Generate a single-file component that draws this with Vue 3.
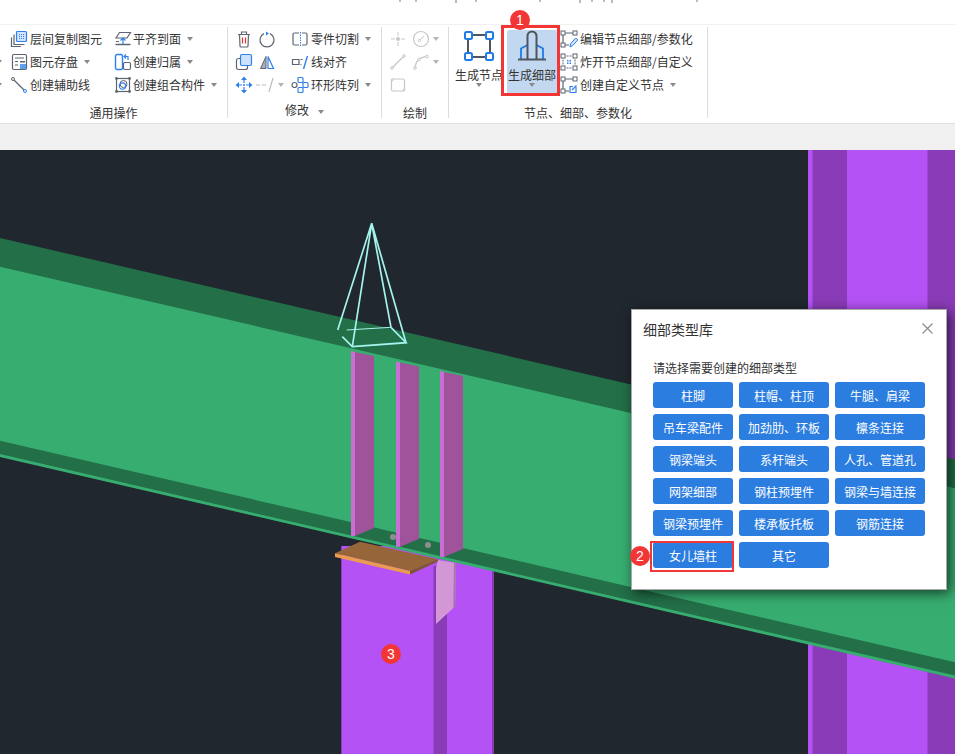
<template>
  <div class="app">
    <div class="top-strip">
      <svg width="955" height="24" viewBox="0 0 955 24">
        <path d="M400 0v2M416 0v2M456 0v3M476 0v2M540 0v2M580 0v3M592 0v2M604 0v2M612 0v3M697 0v2" stroke="#777" stroke-width="1" />
      </svg>
    </div>

    <div class="ribbon">
      <!-- 通用操作 -->
      <div class="group g1">
        <div class="tools">
          <div class="clip-col">
            <div class="tool"></div>
            <div class="tool"><i class="caret"></i></div>
            <div class="tool"><i class="caret"></i></div>
          </div>
          <div class="col col-a">
            <div class="tool">
              <svg class="ico" viewBox="0 0 18 18"><path d="M4 4.500v10h10.500M1.500 7.500v9h9.500" fill="none" stroke="#5d6570" stroke-width="1.200" /><rect x="6.500" y="1.500" width="10" height="10" rx="1" fill="#d3e4fb" stroke="#2f80ed" stroke-width="1.200" /><path d="M9 4.500h5M9 6.500h5M9 8.500h5" stroke="#2f80ed" stroke-dasharray="1 1" /></svg>
              <span>层间复制图元</span>
            </div>
            <div class="tool">
              <svg class="ico" viewBox="0 0 18 18"><rect x="2.500" y="1.500" width="14" height="15" rx="1.500" fill="none" stroke="#5d6570" stroke-width="1.200" /><path d="M5 5h9M5 8.500h3M5 12h3" stroke="#5d6570" /><rect x="10" y="8" width="5" height="1.500" fill="#5d6570" /><rect x="10" y="11" width="6" height="5" fill="#5fa0ee" /></svg>
              <span>图元存盘</span><i class="caret"></i>
            </div>
            <div class="tool">
              <svg class="ico" viewBox="0 0 18 18"><path d="M3.500 3.500L14.500 14.500" stroke="#5d6570" stroke-width="1.200" /><circle cx="3" cy="3" r="1.500" fill="#fff" stroke="#5d6570" /><circle cx="15" cy="15" r="1.500" fill="#fff" stroke="#2f80ed" /></svg>
              <span>创建辅助线</span>
            </div>
          </div>
          <div class="col">
            <div class="tool">
              <svg class="ico" viewBox="0 0 18 18"><path d="M5.500 2.500H16.500L13 8H2z" fill="none" stroke="#5d6570" stroke-width="1.200" /><path d="M9 14V8M6.500 10.500L9 8l2.500 2.500" fill="none" stroke="#2f80ed" stroke-width="1.200" /><path d="M1.500 14.500H16.500" stroke="#5d6570" stroke-width="1.500" /><path d="M2 11.500h3" stroke="#5d6570" /></svg>
              <span>平齐到面</span><i class="caret"></i>
            </div>
            <div class="tool">
              <svg class="ico" viewBox="0 0 18 18"><rect x="1.500" y="1.500" width="7" height="15" rx="1.500" fill="none" stroke="#2f80ed" stroke-width="1.400" /><rect x="9.500" y="9.500" width="7" height="7" rx="1.500" fill="none" stroke="#5d6570" stroke-width="1.200" /><path d="M14 7V3.500H10.500M12 1.500L10 3.500l2 2" fill="none" stroke="#2f80ed" stroke-width="1.200" /></svg>
              <span>创建归属</span><i class="caret"></i>
            </div>
            <div class="tool">
              <svg class="ico" viewBox="0 0 18 18"><rect x="2.500" y="2.500" width="13" height="13" fill="none" stroke="#5d6570" stroke-width="1.200" /><circle cx="2.500" cy="2.500" r="1.400" fill="#5d6570" /><circle cx="15.500" cy="2.500" r="1.400" fill="#5d6570" /><circle cx="2.500" cy="15.500" r="1.400" fill="#5d6570" /><circle cx="15.500" cy="15.500" r="1.400" fill="#5d6570" /><circle cx="9.500" cy="8" r="3.500" fill="none" stroke="#5d6570" /><circle cx="8.500" cy="10" r="3.200" fill="none" stroke="#2f80ed" stroke-width="1.200" /></svg>
              <span>创建组合构件</span><i class="caret"></i>
            </div>
          </div>
        </div>
        <div class="group-label">通用操作</div>
      </div>
      <div class="divider"></div>

      <!-- 修改 -->
      <div class="group g2">
        <div class="tools">
          <div class="col icon-col">
            <div class="tool gap">
              <svg class="ico" viewBox="0 0 18 18"><path d="M3 4.500h12M4.500 4.500l.5 11.500a1 1 0 001 1h6a1 1 0 001-1l.5-11.500M6.500 4.500V2h5v2.500" fill="none" stroke="#5d6570" stroke-width="1.200" /><path d="M7.500 7.500v6M10.500 7.500v6" stroke="#e5322d" stroke-width="1.200" /></svg>
              <svg class="ico" viewBox="0 0 18 18"><path d="M6 3.600A7 7 0 1012 3.600" fill="none" stroke="#5d6570" stroke-width="1.200" /><path d="M8 1.500l3 2-3 2z" fill="#2f80ed" /></svg>
            </div>
            <div class="tool gap">
              <svg class="ico" viewBox="0 0 18 18"><rect x="1.500" y="5.500" width="11" height="11" rx="2" fill="#fff" stroke="#5d6570" stroke-width="1.200" /><rect x="5.500" y="1.500" width="11" height="11" rx="1.500" fill="#cfe2fb" stroke="#2f80ed" stroke-width="1.200" /></svg>
              <svg class="ico" viewBox="0 0 18 18"><path d="M8 3.500L2.500 15.500H8z" fill="#aab0b8" stroke="#5d6570" /><path d="M10 3.500L15.500 15.500H10z" fill="#fff" stroke="#2f80ed" stroke-width="1.200" /></svg>
            </div>
            <div class="tool gap">
              <svg class="ico" viewBox="0 0 18 18"><path d="M9 .5L6 4h6zM9 17.500L6 14h6zM.5 9L4 6v6zM17.500 9L14 6v6z" fill="#2f80ed" /><path d="M9 4v3M9 11v3M4 9h3M11 9h3" stroke="#2f80ed" stroke-width="1.200" /><circle cx="9" cy="9" r="1" fill="#2f80ed" /></svg>
              <svg class="ico wide" viewBox="0 0 22 18"><path d="M1 9h4M7 9h4" stroke="#b9bdc2" stroke-width="1.200" /><path d="M18 2L14 16" stroke="#b9bdc2" stroke-width="1.200" /></svg>
              <i class="caret light tight"></i>
            </div>
          </div>
          <div class="col">
            <div class="tool">
              <svg class="ico" viewBox="0 0 18 18"><path d="M8 3H3.500a1.500 1.500 0 00-1.500 1.500v9A1.500 1.500 0 003.500 15H8M11 3h3.500A1.500 1.500 0 0116 4.500v9a1.500 1.500 0 01-1.500 1.500H11" fill="none" stroke="#5d6570" stroke-width="1.200" /><path d="M9.500 2v14" stroke="#2f80ed" stroke-dasharray="1.500 1" /></svg>
              <span>零件切割</span><i class="caret"></i>
            </div>
            <div class="tool">
              <svg class="ico" viewBox="0 0 18 18"><path d="M8 6.500H1.500v5H8z" fill="none" stroke="#5d6570" stroke-width="1.200" /><path d="M9.500 6.500h2M9.500 11.500h1" stroke="#5d6570" stroke-width="1.200" /><path d="M16.500 3L12.500 16" stroke="#2f80ed" stroke-width="1.400" /></svg>
              <span>线对齐</span>
            </div>
            <div class="tool">
              <svg class="ico" viewBox="0 0 18 18"><rect x="7" y="1.500" width="5" height="5" rx="1" fill="none" stroke="#2f80ed" stroke-width="1.200" /><rect x="12" y="6.500" width="5" height="5" rx="1" fill="none" stroke="#2f80ed" stroke-width="1.200" /><rect x="7" y="11.500" width="5" height="5" rx="1" fill="none" stroke="#2f80ed" stroke-width="1.200" /><circle cx="3.500" cy="9" r="2.500" fill="none" stroke="#5d6570" stroke-width="1.200" /></svg>
              <span>环形阵列</span><i class="caret"></i>
            </div>
          </div>
        </div>
        <div class="group-label raised">修改<i class="caret label-caret"></i></div>
      </div>
      <div class="divider"></div>

      <!-- 绘制 -->
      <div class="group g3">
        <div class="tools">
          <div class="col">
            <div class="tool gap">
              <svg class="ico" viewBox="0 0 18 18"><path d="M2 9h4M12 9h4M9 2v4M9 12v4" stroke="#c4c7cb" /><circle cx="9" cy="9" r="2" fill="#c4c7cb" /></svg>
              <svg class="ico" viewBox="0 0 18 18"><circle cx="9" cy="9" r="7.500" fill="none" stroke="#c4c7cb" stroke-width="1.200" /><path d="M8 10L12 6" stroke="#c4c7cb" /><circle cx="7.500" cy="10.500" r="1.200" fill="#fff" stroke="#c4c7cb" /></svg>
              <i class="caret light"></i>
            </div>
            <div class="tool gap">
              <svg class="ico" viewBox="0 0 18 18"><path d="M3.500 14.500L14.500 3.500" stroke="#c4c7cb" stroke-width="1.200" /><circle cx="3" cy="15" r="1.300" fill="#fff" stroke="#c4c7cb" /><circle cx="15" cy="3" r="1.300" fill="#fff" stroke="#c4c7cb" /></svg>
              <svg class="ico" viewBox="0 0 18 18"><path d="M3 15C3.500 8 8 4 15 3.500" fill="none" stroke="#c4c7cb" stroke-width="1.200" /><circle cx="3" cy="15" r="1.300" fill="#fff" stroke="#c4c7cb" /><circle cx="7" cy="6.500" r="1.300" fill="#fff" stroke="#c4c7cb" /><circle cx="15" cy="3.500" r="1.300" fill="#fff" stroke="#c4c7cb" /></svg>
              <i class="caret light"></i>
            </div>
            <div class="tool">
              <svg class="ico" viewBox="0 0 18 18"><rect x="2.500" y="3" width="13" height="12" rx="1.500" fill="none" stroke="#c4c7cb" stroke-width="1.200" /><circle cx="3" cy="4" r="1" fill="#fff" stroke="#c4c7cb" /><circle cx="15" cy="14" r="1" fill="#fff" stroke="#c4c7cb" /></svg>
            </div>
          </div>
        </div>
        <div class="group-label">绘制</div>
      </div>
      <div class="divider"></div>

      <!-- 节点、细部、参数化 -->
      <div class="group g4">
        <div class="tools">
          <div class="big-btn">
            <svg width="32" height="32" viewBox="0 0 32 32"><path d="M8 5h16M8 27h16M5 8v16M27 8v16" stroke="#4d5560" stroke-width="2" /><rect x="2" y="2" width="7" height="7" rx="1.500" fill="#fff" stroke="#1e7be6" stroke-width="2" /><rect x="23" y="2" width="7" height="7" rx="1.500" fill="#fff" stroke="#1e7be6" stroke-width="2" /><rect x="2" y="23" width="7" height="7" rx="1.500" fill="#fff" stroke="#1e7be6" stroke-width="2" /><rect x="23" y="23" width="7" height="7" rx="1.500" fill="#fff" stroke="#1e7be6" stroke-width="2" /></svg>
            <span>生成节点</span>
            <i class="caret"></i>
          </div>
          <div class="big-btn active">
            <svg width="32" height="32" viewBox="0 0 32 32"><path d="M5 29V18.500L11.500 15M27 29V18.500L20.500 15" fill="none" stroke="#1e7be6" stroke-width="1.800" /><path d="M11.500 29V6a4.500 4.500 0 019 0V29" fill="none" stroke="#4d5560" stroke-width="2" /><path d="M2 29.500H30" stroke="#4d5560" stroke-width="2" /></svg>
            <span>生成细部</span>
            <i class="caret"></i>
            <div class="red-box big"></div>
          </div>
          <div class="col">
            <div class="tool">
              <svg class="ico" viewBox="0 0 18 18"><path d="M5 3h8M3 5v8M5 15h4" stroke="#5d6570" stroke-width="1.200" /><rect x="1" y="1" width="4" height="4" fill="#fff" stroke="#5d6570" /><rect x="13" y="1" width="4" height="4" fill="#fff" stroke="#5d6570" /><rect x="1" y="13" width="4" height="4" fill="#fff" stroke="#5d6570" /><path d="M10 17l.8-3.500 5-5.500 2 2-5 5.500z" fill="#cfe2fb" stroke="#2f80ed" /></svg>
              <span>编辑节点细部/参数化</span>
            </div>
            <div class="tool">
              <svg class="ico" viewBox="0 0 18 18"><path d="M6.500 3h5M6.500 15h5M3 6.500v5M15 6.500v5" stroke="#5d6570" stroke-dasharray="2 1" /><rect x="1" y="1" width="4" height="4" fill="#fff" stroke="#5d6570" /><rect x="13" y="1" width="4" height="4" fill="#fff" stroke="#5d6570" /><rect x="1" y="13" width="4" height="4" fill="#fff" stroke="#5d6570" /><rect x="13" y="13" width="4" height="4" fill="#fff" stroke="#5d6570" /><path d="M7 7h1.500v1.500H7zM9.500 7H11v1.500H9.500zM7 9.500h1.500V11H7zM9.500 9.500H11V11H9.500z" fill="#2f80ed" /></svg>
              <span>炸开节点细部/自定义</span>
            </div>
            <div class="tool">
              <svg class="ico" viewBox="0 0 18 18"><path d="M5 3h8M3 5v8M5 15h4" stroke="#5d6570" stroke-width="1.200" /><rect x="1" y="1" width="4" height="4" fill="#fff" stroke="#5d6570" /><rect x="13" y="1" width="4" height="4" fill="#fff" stroke="#5d6570" /><rect x="1" y="13" width="4" height="4" fill="#fff" stroke="#5d6570" /><path d="M16 11v5.500H10v-6h3" fill="none" stroke="#2f80ed" stroke-width="1.200" /><path d="M12 14l4.500-4.500" stroke="#2f80ed" stroke-width="1.200" /></svg>
              <span>创建自定义节点</span><i class="caret"></i>
            </div>
          </div>
        </div>
        <div class="group-label">节点、细部、参数化</div>
      </div>
      <div class="divider"></div>
      <div class="badge b1">1</div>
    </div>

    <div class="status-bar"></div>

    <div class="scene">
      <svg class="model" width="955" height="604" viewBox="0 150 955 604">
        <rect x="0" y="150" width="955" height="604" fill="#20272f" />

        <!-- 右侧钢柱 -->
        <rect x="808" y="150" width="147" height="604" fill="#b552f5" />
        <rect x="812.500" y="150" width="34.500" height="604" fill="#8a3cb8" />
        <rect x="927.500" y="150" width="27.500" height="604" fill="#8a3cb8" />

        <!-- 女儿墙柱 -->
        <rect x="341" y="546" width="153" height="208" fill="#b552f5" />
        <rect x="341" y="546" width="1" height="208" fill="#8a3cb8" />
        <rect x="492" y="546" width="2" height="208" fill="#8a3cb8" />
        <rect x="433.500" y="566" width="13.500" height="188" fill="#8a3cb8" />

        <!-- 钢梁 -->
        <polygon points="0,238 955,459.600 955,678 0,456.500" fill="#226f48" />
        <polygon points="0,266.700 955,488.300 955,662.300 0,440.700" fill="#38ad70" />
        <polygon points="0,454 955,675.600 955,678.500 0,456.900" fill="#38ad70" />

        <!-- 螺栓 -->
        <circle cx="393" cy="537" r="3" fill="#8d8f8c" />
        <circle cx="428" cy="545" r="3" fill="#8d8f8c" />

        <!-- 加劲板 -->
        <g v-for="p in plates" :key="p.x">
          <polygon :points="p.face" fill="#a0529b" />
          <polygon :points="p.edge" fill="#c96fd3" />
        </g>

        <!-- 柱顶板 -->
        <polygon points="335,553.300 360,541.700 438,559.300 410,571" fill="#966539" />
        <polygon points="335,553.300 410,571 410,574.500 335,557" fill="#ea9b50" />
        <polygon points="410,571 438,559.300 438,561.500 410,574.500" fill="#7d5530" />

        <!-- 牛腿 -->
        <polygon points="436,568 436,624 453.300,608 455,608 456,563 438,560" fill="#d397d8" />
        <polygon points="454,562.500 456,563 455,608 453.300,608" fill="#a774ad" />

        <!-- 线框 -->
        <g fill="none" stroke="#a4f3ec" stroke-width="1.700">
          <path d="M371.700 223.300L337.700 330M371.700 223.300L352.300 346.700M371.700 223.300L391 327.300M371.700 223.300L406 342.700" />
          <path d="M342.300 336.700L352.300 346.700L406 342.700L391 327.300" />
          <path d="M391 327.300L346.700 330" stroke-width="1" />
        </g>
      </svg>

      <div class="badge b3">3</div>

      <div class="dialog">
        <div class="dialog-head">
          <span>细部类型库</span>
          <svg width="11" height="11" viewBox="0 0 11 11"><path d="M0.500 0.500l10 10M10.500 0.500l-10 10" stroke="#8c8c8c" stroke-width="1.200" /></svg>
        </div>
        <div class="dialog-tip">请选择需要创建的细部类型</div>
        <div class="type-grid">
          <button v-for="t in detailTypes" :key="t" class="type-btn">
            {{ t }}
            <template v-if="t === '女儿墙柱'">
              <div class="red-box small"></div>
              <div class="badge b2">2</div>
            </template>
          </button>
        </div>
      </div>
    </div>
  </div>
</template>

<script setup>
const detailTypes = [
  '柱脚', '柱帽、柱顶', '牛腿、肩梁',
  '吊车梁配件', '加劲肋、环板', '檩条连接',
  '钢梁端头', '系杆端头', '人孔、管道孔',
  '网架细部', '钢柱预埋件', '钢梁与墙连接',
  '钢梁预埋件', '楼承板托板', '钢筋连接',
  '女儿墙柱', '其它'
]

// 三块加劲板: x 左边缘, top 顶部y, bottom 底部y
const plates = [
  { x: 351, top: 351, bottom: 536 },
  { x: 396, top: 361.5, bottom: 546.7 },
  { x: 440, top: 371, bottom: 557 }
].map(p => {
  const ex = p.x + 4
  const rx = p.x + 23
  return {
    x: p.x,
    edge: `${p.x},${p.top} ${ex},${p.top + 1} ${ex},${p.bottom} ${p.x},${p.bottom}`,
    face: `${ex},${p.top + 1} ${rx},${p.top + 5} ${rx},${p.bottom - 8} ${ex},${p.bottom}`
  }
})
</script>

<style>
html, body {
  margin: 0;
  background: #fff;
}
</style>

<style scoped>
.app {
  width: 955px;
  height: 754px;
  overflow: hidden;
  font-family: "Noto Sans CJK SC", "Liberation Sans", sans-serif;
  font-size: 12px;
  color: #333;
  background: #fff;
}

.top-strip {
  height: 24px;
  border-bottom: 1px solid #f1f1f1;
}
.top-strip svg {
  display: block;
}

.ribbon {
  position: relative;
  display: flex;
  height: 98px;
  border-bottom: 1px solid #dedede;
}

.group {
  display: flex;
  flex-direction: column;
}
.g1 { width: 227px; }
.g2 { width: 153px; }
.g3 { width: 66px; }
.g4 { width: 258px; }

.divider {
  width: 1px;
  margin: 2px 0 5px;
  background: #dcdcdc;
}

.tools {
  display: flex;
  padding-top: 2px;
}
.g2 .tools { padding-left: 7px; }
.g3 .tools { padding-left: 7px; }
.g4 .tools { padding-left: 5px; }

.clip-col {
  width: 10px;
}
.clip-col .caret {
  margin-left: -4px;
}
.col-a {
  width: 104px;
}
.col-a .tool span {
  margin-left: 2px;
}
.icon-col {
  width: 56px;
}

.tool {
  display: flex;
  align-items: center;
  height: 23px;
  white-space: nowrap;
}
.tool span {
  margin-left: 1px;
}
.g2 .col:not(.icon-col) span {
  margin-left: 2px;
}
.g4 .col .tool span {
  margin-left: 2px;
}
.tool.gap {
  gap: 5px;
}

.ico {
  flex: none;
  width: 18px;
  height: 18px;
}
.ico.wide {
  width: 22px;
  margin-left: -3px;
}

.caret {
  display: inline-block;
  flex: none;
  width: 0;
  height: 0;
  margin-left: 6px;
  border-left: 3.5px solid transparent;
  border-right: 3.5px solid transparent;
  border-top: 4px solid #8a8a8a;
}
.caret.light {
  border-top-color: #b5b5b5;
  margin-left: -2px;
}
.caret.tight {
  margin-left: -4px;
}

.group-label {
  height: 20px;
  margin-top: auto;
  line-height: 20px;
  text-align: center;
}
.group-label.raised {
  line-height: 14px;
}
.label-caret {
  margin-left: 9px;
  vertical-align: 1px;
}

.big-btn {
  position: relative;
  display: flex;
  flex-direction: column;
  align-items: center;
  width: 50px;
  height: 65px;
  margin: 3px 3px 0 0;
}
.big-btn span {
  margin-top: 5px;
  line-height: 16px;
  white-space: nowrap;
}
.big-btn .caret {
  margin: 0;
}
.big-btn.active {
  background: #c2d8f0;
  border-radius: 2px;
}

.red-box {
  position: absolute;
  border: 3px solid #f23535;
  box-sizing: border-box;
  pointer-events: none;
}
.red-box.big {
  left: -6px;
  top: -5px;
  width: 59px;
  height: 71px;
}
.red-box.small {
  left: -3px;
  top: -1px;
  width: 84px;
  height: 31px;
  border-width: 2px;
}

.badge {
  position: absolute;
  width: 20px;
  height: 20px;
  border-radius: 50%;
  background: #f23535;
  color: #fff;
  font-family: "Liberation Sans", sans-serif;
  font-size: 14px;
  line-height: 20px;
  text-align: center;
}
.b1 {
  left: 510px;
  top: -15px;
}
.b2 {
  left: -23px;
  top: 4px;
}
.b3 {
  left: 381px;
  top: 494px;
}

.status-bar {
  height: 26px;
  background: #f0f0f0;
}

.scene {
  position: relative;
  height: 604px;
}
.model {
  display: block;
}

.dialog {
  position: absolute;
  left: 631px;
  top: 159px;
  width: 316px;
  height: 281px;
  box-sizing: border-box;
  background: #fff;
  border: 1px solid #a9a9a9;
  box-shadow: 3px 3px 12px rgba(0, 0, 0, 0.65);
  font-size: 12px;
}
.dialog-head {
  display: flex;
  align-items: center;
  justify-content: space-between;
  height: 37px;
  padding: 0 13px 0 11px;
  font-size: 14px;
}
.dialog-tip {
  height: 18px;
  margin-top: 12px;
  padding-left: 21px;
  line-height: 18px;
}
.type-grid {
  display: grid;
  grid-template-columns: 80px 90px 90px;
  grid-auto-rows: 26px;
  gap: 6px;
  margin-top: 5px;
  padding-left: 21px;
}
.type-btn {
  position: relative;
  padding: 0;
  border: none;
  border-radius: 3px;
  background: #2b7de0;
  color: #fff;
  font-family: inherit;
  font-size: 12px;
  white-space: nowrap;
}
</style>
